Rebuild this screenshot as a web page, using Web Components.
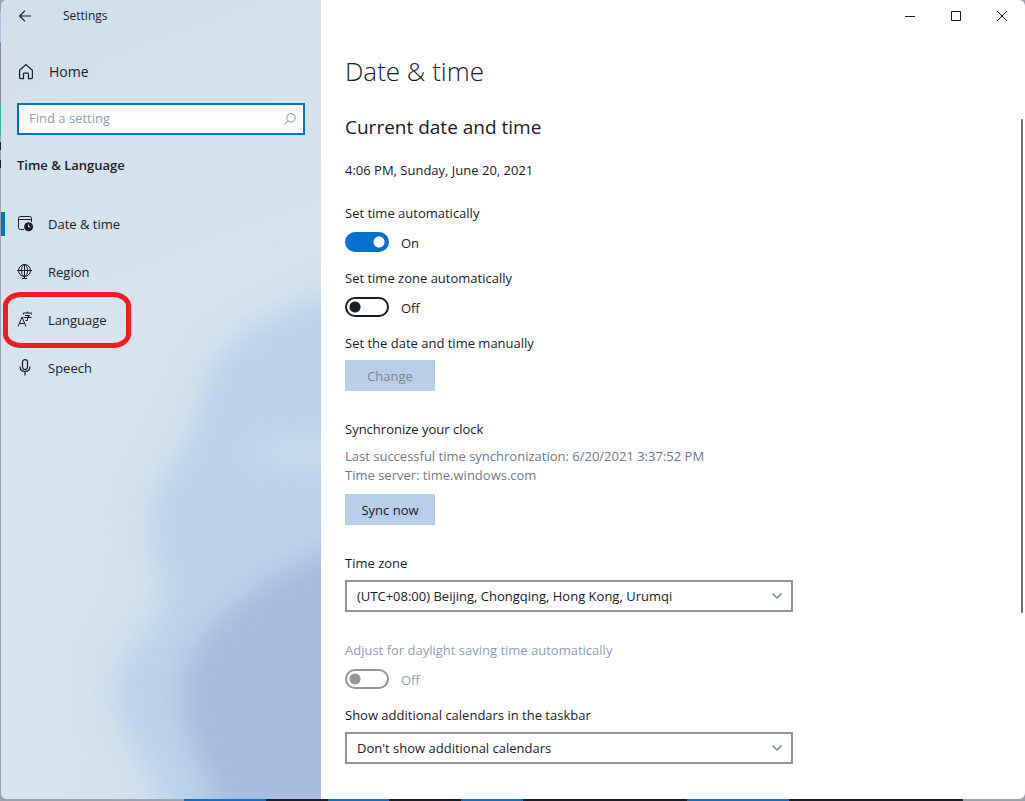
<!DOCTYPE html>
<html lang="en">
<head>
<meta charset="utf-8">
<meta name="viewport" content="width=device-width, initial-scale=1">
<title>Settings</title>
<style>
  html, body { margin: 0; height: 100%; }
  body { font: 13px/20px "Open Sans", "Noto Sans", sans-serif; color: #191c29; }
</style>
</head>
<body>
<settings-window>
  <settings-sidebar slot="sidebar">
    <nav-item label="Date &amp; time" current>
      <svg width="16" height="16" viewBox="0 0 16 16" fill="none" stroke="#191c29"><path d="M7 13.5H3.500q-2 0-2-2v-9q0-2 2-2h9q2 0 2 2V6M1.500 3.500h13"/><circle cx="11.600" cy="10.800" r="4.500" fill="#191c29" stroke="none"/><path d="M11.500 8.500v2.500h2" stroke="#d6e3ed"/></svg>
    </nav-item>
    <nav-item label="Region">
      <svg width="16" height="16" viewBox="0 0 16 16" fill="none" stroke="#191c29"><circle cx="7.500" cy="6.500" r="6"/><ellipse cx="7.500" cy="6.500" rx="3" ry="6"/><path d="M0 6.500h15M7.500 0v15M5 14.500h5"/></svg>
    </nav-item>
    <nav-item label="Language" marked>
      <svg width="16" height="16" viewBox="0 0 16 16" fill="none" stroke="#191c29"><path d="M1 14.500 5 5l4 9.500M2.500 11.500h5M10.500-.5V1M6.500 2.500v-1.500h8v1.500M8 3.500h5l-2.500 1.500v3.500H8.500M6.500 5.500h8"/></svg>
    </nav-item>
    <nav-item label="Speech">
      <svg width="16" height="16" viewBox="0 0 16 16" fill="none" stroke="#191c29" stroke-width="1.200"><rect x="5.500" y="-.4" width="5" height="10" rx="2.500"/><path d="M3 6.500c0 3.500 2 5 5 5s5-1.500 5-5M8 11.500V15.500"/></svg>
    </nav-item>
  </settings-sidebar>
  <date-time-page></date-time-page>
</settings-window>

<script>
function define(name, html, setup) {
  const template = document.createElement('template');
  template.innerHTML = html;
  customElements.define(name, class extends HTMLElement {
    constructor() {
      super();
      this.attachShadow({ mode: 'open' }).append(template.content.cloneNode(true));
    }
    connectedCallback() {
      if (setup) setup(this, this.shadowRoot);
    }
  });
}

/* Window frame: sidebar, caption buttons, page, scroll thumb */
define('settings-window', `
<style>
  :host { display: block; box-sizing: border-box; min-height: 100vh; padding: 0 0 2px 1px;
    background:
      linear-gradient(90deg, #98a3ae 0 18%, #0a70d0 18% 26%, #1b1e2c 26% 32%, #0a70d0 32% 38%, #1b1e2c 38% 45%, #0a70d0 45% 51%, #1b1e2c 51% 67%, #0a70d0 67% 77%, #1b1e2c 77% 94%, #98a3ae 94%) bottom / 100% 2px no-repeat,
      linear-gradient(#98a3ae 0 12px, #b0c2e4 12px 42px, #8a8a8e 42px 106px, #30b898 106px 136px, #98a3ae 136px 142px, #1b1e2c 142px 150px, #98a3ae 150px 160px, #1b1e2c 160px 168px, #98a3ae 168px) left / 1px 100% no-repeat,
      #98a3ae; }
  .window { display: grid; grid-template-columns: 320px minmax(0, 1fr); min-height: calc(100vh - 2px); border-radius: 6px; overflow: hidden; background: #fff; }
  .main { display: grid; grid-template-columns: minmax(0, 1fr) 2px; column-gap: 2px; padding-right: 2px; }
  .content { display: flex; flex-direction: column; }
  .caption { display: flex; justify-content: flex-end; margin-right: -6px; }
  button { width: 46px; height: 31px; padding: 0; border: 0; background: none; display: grid; place-items: center; }
  .rail { display: flex; flex-direction: column; }
  .rail::before { content: ""; flex: 119; }
  .rail i { flex: 494; background: #6c6e72; border-radius: 1px; }
  .rail::after { content: ""; flex: 186; }
</style>
<div class="window">
  <slot name="sidebar"></slot>
  <div class="main">
    <div class="content">
      <div class="caption">
        <button aria-label="Minimize"><svg width="10" height="10" stroke="#191c29"><path d="M0 5.500h10"/></svg></button>
        <button aria-label="Maximize"><svg width="10" height="10" fill="none" stroke="#191c29"><path d="M.5.5h9v9h-9z"/></svg></button>
        <button aria-label="Close"><svg width="10" height="10" stroke="#191c29"><path d="m0 0 10 10M10 0 0 10"/></svg></button>
      </div>
      <slot></slot>
    </div>
    <div class="rail"><i></i></div>
  </div>
</div>`);

define('settings-sidebar', `
<style>
  :host { display: grid; grid-template: 1fr / 100%; background: linear-gradient(160deg, #d1dfea, #d7e4ed 40%); }
  .art, .panel { grid-area: 1 / 1; }
  .art { width: 100%; height: 100%; min-height: 0; contain: size; display: block; }
  .panel { z-index: 1; display: flex; flex-direction: column; }
  .title { display: flex; align-items: center; height: 31px; font-size: 12px; }
  .title button { width: 48px; height: 30px; padding: 0; border: 0; background: none; display: grid; place-items: center; }
  .title span { padding-left: 14px; }
  .home { display: flex; align-items: center; gap: 15px; height: 48px; margin-top: 17px; padding-left: 17px; color: inherit; text-decoration: none; font-size: 14px; }
  .search { display: flex; align-items: center; box-sizing: border-box; height: 32px; margin: 7px 16px 0; padding: 0 7px 0 10px; border: 2px solid #0a70d0; background: #fff; }
  input { flex: 1; min-width: 0; height: 28px; padding: 0 0 2px; box-sizing: border-box; border: 0; outline: 0; background: none; font: inherit; color: inherit; }
  input::placeholder { color: #8f9fb2; opacity: 1; }
  h2 { margin: 20px 0 0 16px; font-size: 13px; line-height: 20px; font-weight: 600; }
  nav { margin-top: 25px; }
</style>
<svg class="art" viewBox="0 0 320 799" preserveAspectRatio="none" aria-hidden="true">
  <defs>
    <filter id="soft" filterUnits="userSpaceOnUse" x="0" y="150" width="460" height="800"><feGaussianBlur stdDeviation="15"/></filter>
    <filter id="softer" filterUnits="userSpaceOnUse" x="0" y="150" width="460" height="800"><feGaussianBlur stdDeviation="26"/></filter>
  </defs>
  <path filter="url(#softer)" fill="#c6d9ea" opacity=".5" d="M400 250 320 285 205 350 170 440 135 490 135 540 150 575 105 640 95 700 115 750 145 860H400z"/>
  <path filter="url(#soft)" fill="#bad2eb" d="M400 275 320 300C265 316 225 345 212 370S200 430 184 453 152 490 152 531 175 572 160 613 117 650 117 690 133 736 158 787L180 860H400z"/>
  <ellipse filter="url(#soft)" cx="310" cy="452" rx="60" ry="12" fill="#d0e0ed"/>
  <path filter="url(#soft)" fill="#a9bbde" d="M400 525 320 553C275 570 240 600 220 618S180 665 180 695 192 745 212 797L235 860H400z"/>
</svg>
<div class="panel">
  <div class="title">
    <button aria-label="Back"><svg width="12" height="12" fill="none" stroke="#191c29" stroke-width="1.200"><path d="M12 6H.8M6 .6.7 6 6 11.400"/></svg></button>
    <span>Settings</span>
  </div>
  <a class="home" href="#home">
    <svg width="16" height="16" fill="none" stroke="#191c29" stroke-width="1.200"><path d="M1.600 6.200 8 .6l6.400 5.600v7.200q0 1.200-1.200 1.200h-2.700V10q0-.8-.8-.8H6.300q-.8 0-.8.8v4.600H2.800q-1.200 0-1.200-1.200z"/></svg>
    Home
  </a>
  <label class="search">
    <input type="text" placeholder="Find a setting" aria-label="Find a setting">
    <svg width="12" height="12" fill="none" stroke="#8295aa"><circle cx="7" cy="4.800" r="4.200"/><path d="M4 8 .5 11.500"/></svg>
  </label>
  <h2>Time &amp; Language</h2>
  <nav><slot></slot></nav>
</div>`);

define('nav-item', `
<style>
  :host { display: block; position: relative; }
  a { display: flex; align-items: center; gap: 15px; height: 48px; padding-left: 16px; color: inherit; text-decoration: none; }
  ::slotted(svg) { display: block; overflow: visible; }
  :host([current]) a { background: linear-gradient(#0a70d0, #0a70d0) left / 4px 24px no-repeat; }
  :host([marked])::after { content: ""; position: absolute; box-sizing: border-box; left: 2px; top: -4px; width: 128px; height: 56px; border: 5px solid #ee1c25; border-radius: 18px / 14px; pointer-events: none; }
</style>
<a href="#"><slot></slot><span></span></a>`, (host, root) => {
  root.querySelector('span').textContent = host.getAttribute('label');
});

define('toggle-field', `
<style>
  :host { display: flex; flex-direction: column; gap: 9px; }
  :host([disabled]) { color: #8f9fb2; }
  div { display: flex; align-items: center; gap: 12px; height: 20px; }
  input { appearance: none; box-sizing: border-box; width: 44px; height: 20px; margin: 0; border: 2px solid #191c29; border-radius: 10px; background: radial-gradient(circle at 8px 8px, #191c29 5px, transparent 6px); }
  input:checked { border-color: #0a70d0; background: radial-gradient(circle at 32px 8px, #fff 5px, #0a70d0 6px); }
  input:disabled { border-color: #939598; background: radial-gradient(circle at 8px 8px, #939598 5px, transparent 6px); }
  output { padding-top: 2px; }
</style>
<label for="switch"></label>
<div><input id="switch" type="checkbox" role="switch"><output for="switch"></output></div>`, (host, root) => {
  const input = root.querySelector('input');
  const output = root.querySelector('output');
  root.querySelector('label').textContent = host.getAttribute('label');
  input.checked = host.hasAttribute('checked');
  input.disabled = host.hasAttribute('disabled');
  const show = () => { output.textContent = input.checked ? 'On' : 'Off'; };
  input.onchange = show;
  show();
});

define('select-field', `
<style>
  :host { display: flex; flex-direction: column; gap: 7px; }
  div { display: grid; align-items: center; width: 100%; max-width: 448px; }
  select, svg { grid-area: 1 / 1; }
  select { appearance: none; box-sizing: border-box; width: 100%; height: 32px; padding: 0 32px 0 10px; border: 2px solid #939598; border-radius: 0; background: #fff; font: inherit; color: inherit; }
  svg { justify-self: end; margin-right: 11px; pointer-events: none; }
</style>
<label for="list"></label>
<div>
  <select id="list"><option></option></select>
  <svg width="10" height="6" fill="none" stroke="#5a7591" stroke-width="1.200"><path d="m.5.5 4.500 4.500L9.500.5"/></svg>
</div>`, (host, root) => {
  root.querySelector('label').textContent = host.getAttribute('label');
  root.querySelector('option').textContent = host.getAttribute('value');
});

define('push-button', `
<style>
  :host { display: block; }
  button { width: 90px; height: 31px; padding: 0; border: 0; background: #b8cee9; font: inherit; color: #191c29; }
  button:disabled { color: #7f868f; }
</style>
<button><slot></slot></button>`, (host, root) => {
  root.querySelector('button').disabled = host.hasAttribute('disabled');
});

define('date-time-page', `
<style>
  :host { display: block; padding: 20px 24px 35px; }
  h1 { margin: 0; font-size: 26px; line-height: 40px; font-weight: 300; }
  h2 { margin: 22px 0 0; font-size: 19px; line-height: 28px; font-weight: 400; }
  p { margin: 0; }
  .now { margin: 19px 0 23px; }
  .sections { display: flex; flex-direction: column; gap: 28px; }
  section { display: flex; flex-direction: column; gap: 16px; }
  .row { display: flex; flex-direction: column; gap: 7px; }
  .sync { gap: 8px; }
  .status { line-height: 19px; padding-bottom: 1px; color: #6f7b8a; }
</style>
<h1>Date &amp; time</h1>
<h2>Current date and time</h2>
<p class="now">4:06 PM, Sunday, June 20, 2021</p>
<div class="sections">
  <section>
    <toggle-field label="Set time automatically" checked></toggle-field>
    <toggle-field label="Set time zone automatically"></toggle-field>
    <div class="row"><p>Set the date and time manually</p><push-button disabled>Change</push-button></div>
  </section>
  <section>
    <div class="row sync">
      <p>Synchronize your clock</p>
      <p class="status">Last successful time synchronization: 6/20/2021 3:37:52 PM<br>Time server: time.windows.com</p>
      <push-button>Sync now</push-button>
    </div>
  </section>
  <section>
    <select-field label="Time zone" value="(UTC+08:00) Beijing, Chongqing, Hong Kong, Urumqi"></select-field>
  </section>
  <section>
    <toggle-field label="Adjust for daylight saving time automatically" disabled></toggle-field>
    <select-field label="Show additional calendars in the taskbar" value="Don't show additional calendars"></select-field>
  </section>
</div>`);
</script>
</body>
</html>
